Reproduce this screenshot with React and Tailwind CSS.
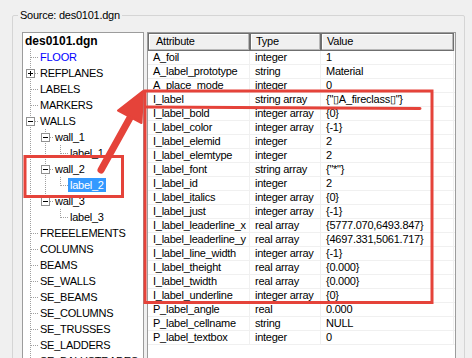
import React from "react";

const RED = "#e5433a";

const attributes = [
  ["A_foil", "integer", "1"],
  ["A_label_prototype", "string", "Material"],
  ["A_place_mode", "integer", "0"],
  ["I_label", "string array", "{\"\u25AFA_fireclass\u25AF\"}"],
  ["I_label_bold", "integer array", "{0}"],
  ["I_label_color", "integer array", "{-1}"],
  ["I_label_elemid", "integer", "2"],
  ["I_label_elemtype", "integer", "2"],
  ["I_label_font", "string array", "{\"*\"}"],
  ["I_label_id", "integer", "2"],
  ["I_label_italics", "integer array", "{0}"],
  ["I_label_just", "integer array", "{-1}"],
  ["I_label_leaderline_x", "real array", "{5777.070,6493.847}"],
  ["I_label_leaderline_y", "real array", "{4697.331,5061.717}"],
  ["I_label_line_width", "integer array", "{-1}"],
  ["I_label_theight", "real array", "{0.000}"],
  ["I_label_twidth", "real array", "{0.000}"],
  ["I_label_underline", "integer array", "{0}"],
  ["P_label_angle", "real", "0.000"],
  ["P_label_cellname", "string", "NULL"],
  ["P_label_textbox", "integer", "0"],
];

// guides: one entry per indent column (pipe | tee | elbow | blank)
const treeNodes = [
  { label: "des0101.dgn", guides: [], root: true },
  { label: "FLOOR", guides: ["tee"], blue: true },
  { label: "REFPLANES", guides: ["tee"], box: "+" },
  { label: "LABELS", guides: ["tee"] },
  { label: "MARKERS", guides: ["tee"] },
  { label: "WALLS", guides: ["tee"], box: "-" },
  { label: "wall_1", guides: ["pipe", "tee"], box: "-" },
  { label: "label_1", guides: ["pipe", "pipe", "elbow"] },
  { label: "wall_2", guides: ["pipe", "tee"], box: "-" },
  { label: "label_2", guides: ["pipe", "pipe", "elbow"], selected: true },
  { label: "wall_3", guides: ["pipe", "elbow"], box: "-" },
  { label: "label_3", guides: ["pipe", "blank", "elbow"] },
  { label: "FREEELEMENTS", guides: ["tee"] },
  { label: "COLUMNS", guides: ["tee"] },
  { label: "BEAMS", guides: ["tee"] },
  { label: "SE_WALLS", guides: ["tee"] },
  { label: "SE_BEAMS", guides: ["tee"] },
  { label: "SE_COLUMNS", guides: ["tee"] },
  { label: "SE_TRUSSES", guides: ["tee"] },
  { label: "SE_LADDERS", guides: ["tee"] },
  { label: "SE_BALUSTRADES", guides: ["tee"] },
];

const dot = { stroke: "#a0a0a0", strokeWidth: 1, strokeDasharray: "1 1" };

const Guide = ({ kind, box }) => (
  <svg width="15" height="16" className="shrink-0">
    {(kind === "pipe" || kind === "tee") && <line x1="7.5" y1="0" x2="7.5" y2="16" {...dot} />}
    {kind === "elbow" && <line x1="7.5" y1="0" x2="7.5" y2="9" {...dot} />}
    {(kind === "tee" || kind === "elbow") && <line x1="8" y1="8.5" x2="15" y2="8.5" {...dot} />}
    {box && (
      <g>
        <rect x="3.5" y="4.5" width="8" height="8" fill="#fff" stroke="#919191" />
        <line x1="5" y1="8.5" x2="10" y2="8.5" stroke="#000" />
        {box === "+" && <line x1="7.5" y1="6" x2="7.5" y2="11" stroke="#000" />}
      </g>
    )}
  </svg>
);

const TreeRow = ({ node }) => (
  <div className="flex h-4 items-center">
    {node.guides.map((g, i) => (
      <Guide key={i} kind={g} box={i === node.guides.length - 1 ? node.box : null} />
    ))}
    <span
      className={`px-[2px] leading-[14px] whitespace-nowrap ${
        node.root ? "font-bold text-[12px] tracking-normal" : ""
      } ${node.selected ? "bg-[#3399ff] text-white" : node.blue ? "text-[#0000ff]" : "text-[#000]"}`}
    >
      {node.label}
    </span>
  </div>
);

const Annotations = () => (
  <svg width="472" height="358" className="absolute left-0 top-0 pointer-events-none">
    <rect x="145" y="91" width="287" height="211.5" fill="none" stroke={RED} strokeWidth="3" />
    <line x1="147" y1="107" x2="420" y2="108.5" stroke={RED} strokeWidth="3" strokeLinecap="round" />
    <rect x="25" y="156.5" width="97.5" height="40" fill="none" stroke={RED} strokeWidth="3" />
    <line x1="101" y1="170" x2="131" y2="116" stroke={RED} strokeWidth="7" strokeLinecap="round" />
    <polygon points="143,91 141.5,123 118,110.5" fill={RED} stroke={RED} strokeWidth="2" strokeLinejoin="round" />
  </svg>
);

export default function App() {
  return (
    <div className="relative w-[472px] h-[358px] overflow-hidden bg-[#f0f0f0] font-['Liberation_Sans',Arial,sans-serif] text-[11px] tracking-[-0.25px] text-black">
      <div className="relative mt-[15px] ml-[12px] w-[453px] h-[360px] border border-[#d5d5d5] rounded-[2px]">
        <span className="absolute left-[5px] -top-[8px] px-[2px] bg-[#f0f0f0] leading-[15px] whitespace-nowrap">
          Source: des0101.dgn
        </span>
        <div className="flex gap-[3px] pt-[16px] pl-[9px]">
          <div className="w-[122px] h-[340px] shrink-0 border border-[#9c9c9c] bg-white">
            {treeNodes.map((n) => (
              <TreeRow key={n.label} node={n} />
            ))}
          </div>
          <div className="w-[309px] h-[340px] shrink-0 border border-[#9c9c9c] bg-white">
            <div className="grid grid-cols-[102px_71px_133px] h-[18px] bg-[#f0f0f0]">
              {["Attribute", "Type", "Value"].map((h, i) => (
                <div
                  key={h}
                  className={`border border-[#6f6f6f] shadow-[inset_-1px_-1px_0_#b9b9b9,inset_1px_1px_0_#fff] leading-[15px] ${
                    i === 0 ? "pl-[7px]" : "pl-[5px]"
                  }`}
                >
                  {h}
                </div>
              ))}
            </div>
            {attributes.map(([name, type, value]) => (
              <div key={name} className="grid grid-cols-[102px_71px_133px] h-[14px] border-b border-[#f0f0f0] leading-[13px]">
                <div className="pl-[5px] border-r border-[#f0f0f0] whitespace-nowrap overflow-hidden">{name}</div>
                <div className="pl-[5px] border-r border-[#f0f0f0] whitespace-nowrap overflow-hidden">{type}</div>
                <div className="pl-[5px] border-r border-[#f0f0f0] whitespace-nowrap overflow-hidden">{value}</div>
              </div>
            ))}
          </div>
        </div>
      </div>
      <Annotations />
    </div>
  );
}
